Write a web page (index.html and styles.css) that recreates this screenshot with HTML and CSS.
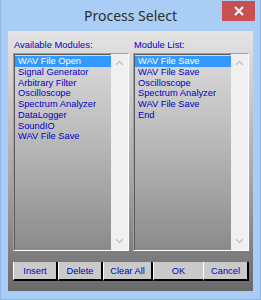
FILE: index.html
```html
<!DOCTYPE html>
<html lang="en">
<head>
    <meta charset="utf-8" />
    <title>Process Select</title>
    <link rel="stylesheet" href="styles.css">
</head>
<body>
    <div class="window">
        <div class="titlebar">
            <span class="title">Process Select</span>
            <button class="close">
                <svg width="10" height="10" viewBox="0 0 10 10"><path d="M1 1 L9 9 M9 1 L1 9" stroke="#fff" stroke-width="2"/></svg>
            </button>
        </div>

        <div class="client">
            <div class="panels">
                <div class="panel">
                    <div class="label">Available Modules:</div>
                    <div class="listbox">
                        <ul class="items">
                            <li class="selected">WAV File Open</li>
                            <li>Signal Generator</li>
                            <li>Arbitrary Filter</li>
                            <li>Oscilloscope</li>
                            <li>Spectrum Analyzer</li>
                            <li>DataLogger</li>
                            <li>SoundIO</li>
                            <li>WAV File Save</li>
                        </ul>
                        <div class="scrollbar">
                            <svg width="9" height="6" viewBox="0 0 9 6"><polyline points="1,5 4.5,1.5 8,5" fill="none" stroke="#c4c4c4" stroke-width="1.5"/></svg>
                            <svg width="9" height="6" viewBox="0 0 9 6"><polyline points="1,1 4.5,4.5 8,1" fill="none" stroke="#c4c4c4" stroke-width="1.5"/></svg>
                        </div>
                    </div>
                </div>

                <div class="panel">
                    <div class="label">Module List:</div>
                    <div class="listbox">
                        <ul class="items">
                            <li class="selected">WAV File Save</li>
                            <li>WAV File Save</li>
                            <li>Oscilloscope</li>
                            <li>Spectrum Analyzer</li>
                            <li>WAV File Save</li>
                            <li>End</li>
                        </ul>
                        <div class="scrollbar">
                            <svg width="9" height="6" viewBox="0 0 9 6"><polyline points="1,5 4.5,1.5 8,5" fill="none" stroke="#c4c4c4" stroke-width="1.5"/></svg>
                            <svg width="9" height="6" viewBox="0 0 9 6"><polyline points="1,1 4.5,4.5 8,1" fill="none" stroke="#c4c4c4" stroke-width="1.5"/></svg>
                        </div>
                    </div>
                </div>
            </div>

            <div class="buttons">
                <button class="btn w45">Insert</button>
                <button class="btn w45">Delete</button>
                <button class="btn w50">Clear All</button>
                <button class="btn w50 default">OK</button>
                <button class="btn w46">Cancel</button>
            </div>
        </div>
    </div>
</body>
</html>
```

FILE: styles.css
```css
body {
    margin: 0;
    font-family: "Liberation Sans", Arial, sans-serif;
    background: #a9cdf4;
}

.window {
    width: 261px;
    height: 300px;
    box-sizing: border-box;
    background: #a9cdf4;
    border: 1px solid #8fb6e0;
    border-top: none;
    display: flex;
    flex-direction: column;
}

.titlebar {
    height: 31px;
    position: relative;
    display: flex;
    justify-content: center;
    align-items: center;
}

.title {
    font-family: "Noto Sans", "Open Sans", sans-serif;
    font-size: 14px;
    color: #2e2e2e;
    margin-top: -1px;
}

.close {
    position: absolute;
    top: 1px;
    right: 5px;
    width: 33px;
    height: 20px;
    border: 0;
    padding: 0;
    background: #c75050;
    display: flex;
    justify-content: center;
    align-items: center;
}

.client {
    margin: 0 7px 8px 7px;
    flex: 1;
    background: linear-gradient(#e4e4e4, #cfcfcf 20%, #a2a2a2 60%, #6a6a6a 100%);
    padding: 8px 4px 0 5px;
    display: flex;
    flex-direction: column;
}

.panels {
    display: flex;
    gap: 4px;
}

.panel {
    width: 116px;
    display: flex;
    flex-direction: column;
}

.label {
    font-size: 9.4px;
    line-height: 11px;
    height: 11px;
    color: #0000c8;
    padding-left: 1px;
    margin-bottom: 3px;
}

.listbox {
    height: 198px;
    box-sizing: border-box;
    border-top: 1px solid #a0a0a0;
    border-left: 1px solid #a0a0a0;
    border-right: 1px solid #ffffff;
    border-bottom: 1px solid #ffffff;
    box-shadow: inset 1px 1px 0 #5a5a5a;
    background: linear-gradient(#dadada, #c4c4c4 30%, #a4a4a4 70%, #8a8a8a);
    display: flex;
}

.items {
    list-style: none;
    margin: 0;
    padding: 2px 0 0 1px;
    flex: 1;
}

.items li {
    font-size: 9.3px;
    line-height: 10.75px;
    height: 10.75px;
    color: #0000c8;
    padding-left: 3px;
    white-space: nowrap;
}

.items li.selected {
    background: #3399ff;
    color: #ffffff;
}

.scrollbar {
    width: 17px;
    background: #f0f0f0;
    display: flex;
    flex-direction: column;
    justify-content: space-between;
    align-items: center;
    padding: 6px 0 6px;
}

.buttons {
    display: flex;
    margin-top: 11px;
}

.btn {
    height: 19px;
    box-sizing: border-box;
    padding: 0;
    font-family: "Liberation Sans", Arial, sans-serif;
    font-size: 9.3px;
    color: #0000c8;
    background: #cacaca;
    border: 0;
    border-left: 1px solid #ffffff;
    border-right: 2px solid #000000;
    border-bottom: 2px solid #000000;
    border-radius: 0;
}

.btn.default {
    border-right: 0;
}

.w45 { width: 45px; }
.w46 { width: 46px; }
.w50 { width: 50px; }
```
